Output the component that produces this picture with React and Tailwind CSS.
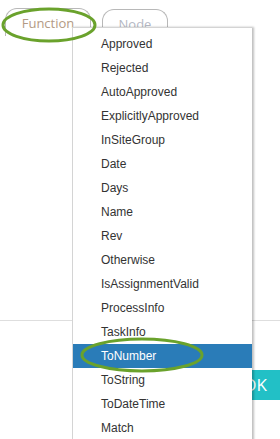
const items = [
  "Approved",
  "Rejected",
  "AutoApproved",
  "ExplicitlyApproved",
  "InSiteGroup",
  "Date",
  "Days",
  "Name",
  "Rev",
  "Otherwise",
  "IsAssignmentValid",
  "ProcessInfo",
  "TaskInfo",
  "ToNumber",
  "ToString",
  "ToDateTime",
  "Match",
];

const Ring = ({ className, w, h }) => (
  <svg className={className} width={w} height={h} viewBox={`0 0 ${w} ${h}`}>
    <ellipse
      cx={w / 2}
      cy={h / 2}
      rx={w / 2 - 2}
      ry={h / 2 - 2}
      fill="none"
      stroke="#6aa22c"
      strokeWidth="3"
    />
  </svg>
);

const App = () => {
  return (
    <div className="relative w-[280px] h-[439px] overflow-hidden bg-white font-[Liberation_Sans,Arial,sans-serif] flex flex-col">

      {/* tabs */}
      <div className="flex items-end gap-[11px] pl-[5px] pt-[8px]">
        <div className="w-[86px] h-[28px] rounded-t-[12px] border border-b-0 border-[#b8b8b8] flex items-center justify-center pt-[3px] text-[13px] text-[#b39a84] font-[Open_Sans,sans-serif]">
          Function
        </div>
        <div className="w-[66px] h-[27px] rounded-t-[12px] border border-b-0 border-[#b8b8b8] flex items-center justify-center pt-[3px] text-[13px] text-[#b4b8c4] font-[Open_Sans,sans-serif]">
          Node
        </div>
      </div>

      <div className="flex-1 max-h-[284px]" />

      {/* footer */}
      <div className="border-t border-[#dedede] h-[119px] flex flex-col">
        <div className="mt-[49px] flex justify-end">
          <button className="w-[50px] h-[30px] bg-[#22c0c6] text-white text-[17px] font-[Open_Sans,sans-serif]">
            OK
          </button>
        </div>
      </div>

      {/* dropdown */}
      <div className="absolute left-[72px] top-[27px] w-[180px] h-[430px] bg-white border-l border-t border-[#d4d4d4] shadow-[2px_0_2px_rgba(0,0,0,0.25)] pt-[4px]">
        {items.map((it) => (
          <div
            key={it}
            className={
              it === "ToNumber"
                ? "h-[24px] leading-[24px] pl-[28px] text-[12px] text-white bg-[#2a7cb8]"
                : "h-[24px] leading-[24px] pl-[28px] text-[12px] text-[#333]"
            }
          >
            {it}
          </div>
        ))}
      </div>

      <Ring className="absolute left-[1px] top-[7px]" w={96} h={36} />
      <Ring className="absolute left-[80px] top-[337px]" w={124} h={36} />
    </div>
  );
};

export default App;
